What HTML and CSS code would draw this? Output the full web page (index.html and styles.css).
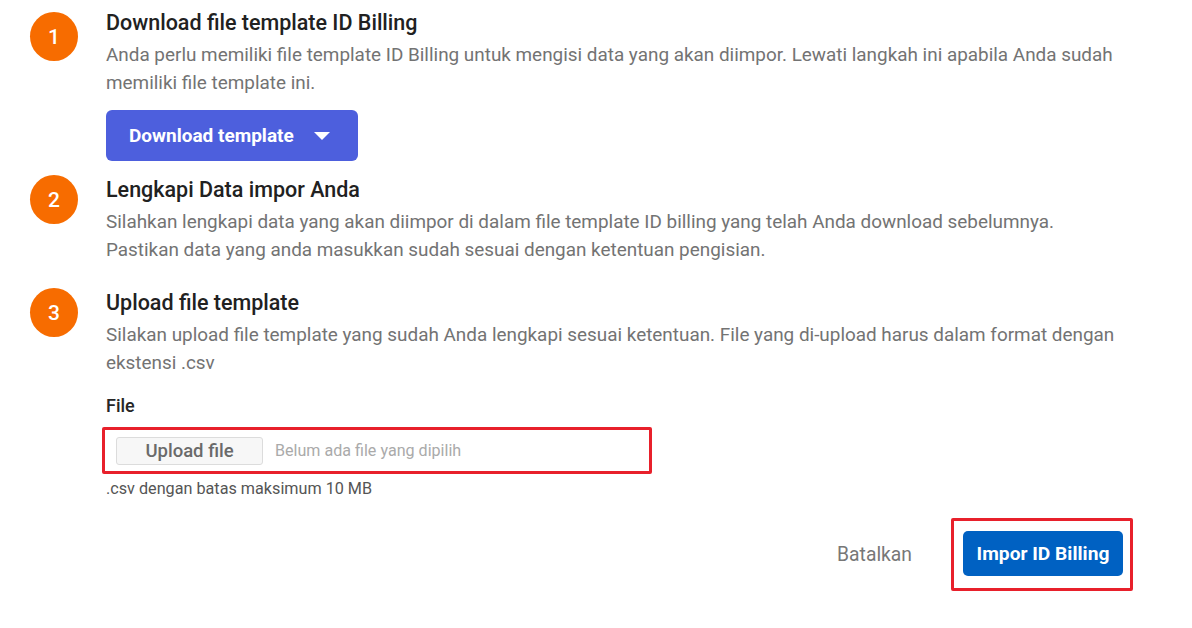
FILE: index.html
```html
<!DOCTYPE html>
<html lang="id">
<head>
<meta charset="utf-8">
<title>Impor ID Billing</title>
<link rel="stylesheet" href="styles.css">
</head>
<body>
<div class="page">
  <section class="step step-1">
    <div class="num">1</div>
    <div class="body">
      <h2 class="title">Download file template ID Billing</h2>
      <p class="desc">Anda perlu memiliki file template ID Billing untuk mengisi data yang akan diimpor. Lewati langkah ini apabila Anda sudah memiliki file template ini.</p>
      <button class="btn-download" type="button">Download template <span class="caret"></span></button>
    </div>
  </section>

  <section class="step step-2">
    <div class="num">2</div>
    <div class="body">
      <h2 class="title">Lengkapi Data impor Anda</h2>
      <p class="desc">Silahkan lengkapi data yang akan diimpor di dalam file template ID billing yang telah Anda download sebelumnya. Pastikan data yang anda masukkan sudah sesuai dengan ketentuan pengisian.</p>
    </div>
  </section>

  <section class="step step-3">
    <div class="num">3</div>
    <div class="body">
      <h2 class="title">Upload file template</h2>
      <p class="desc">Silakan upload file template yang sudah Anda lengkapi sesuai ketentuan. File yang di-upload harus dalam format dengan ekstensi .csv</p>
      <div class="field-label">File</div>
      <div class="file-box">
        <span class="file-btn">Upload file</span>
        <span class="file-name">Belum ada file yang dipilih</span>
      </div>
      <div class="hint">.csv dengan batas maksimum 10 MB</div>
    </div>
  </section>

  <footer class="actions">
    <button class="btn-cancel" type="button">Batalkan</button>
    <div class="highlight">
      <button class="btn-primary" type="button">Impor ID Billing</button>
    </div>
  </footer>
</div>
</body>
</html>
```

FILE: styles.css
```css
* { box-sizing: border-box; }
html, body { margin: 0; padding: 0; background: #fff; }
body {
  font-family: Roboto, "Liberation Sans", Arial, sans-serif;
  color: #212121;
  width: 1192px;
  height: 628px;
  overflow: hidden;
}
.page {
  padding: 8px 59px 0 30px;
}
.step {
  display: flex;
  align-items: flex-start;
  gap: 28px;
}
.num {
  flex: 0 0 48px;
  width: 48px;
  height: 49px;
  border-radius: 50%;
  background: #f76c00;
  color: #fff;
  font-size: 21px;
  font-weight: 500;
  display: flex;
  align-items: center;
  justify-content: center;
}
.step-1 .num { margin-top: 4px; }
.body {
  flex: 1;
  min-width: 0;
  max-width: 1016px;
}
.title {
  margin: 0;
  font-size: 21.5px;
  font-weight: 500;
  line-height: 30px;
  color: #212121;
}
.desc {
  margin: 3px 0 0;
  font-size: 18.9px;
  line-height: 28px;
  color: #737373;
}
.btn-download {
  margin-top: 13px;
  height: 51px;
  width: 252px;
  border: 0;
  border-radius: 6px;
  background: #4d5fdd;
  color: #fff;
  font-family: inherit;
  font-size: 19px;
  font-weight: 700;
  padding: 0 0 0 23px;
  display: flex;
  align-items: center;
  cursor: pointer;
}
.caret {
  display: inline-block;
  width: 0;
  height: 0;
  margin-left: 20px;
  border-left: 8px solid transparent;
  border-right: 8px solid transparent;
  border-top: 8px solid #fff;
}
.step-2 { margin-top: 14px; }
.step-3 { margin-top: 24px; }
.field-label {
  margin-top: 17px;
  font-size: 18px;
  font-weight: 500;
  line-height: 24px;
  color: #262626;
}
.file-box {
  margin-top: 9px;
  margin-left: -4px;
  width: 550px;
  height: 47px;
  border: 3px solid #e8202b;
  border-radius: 2px;
  display: flex;
  align-items: center;
  padding-left: 11px;
}
.file-btn {
  width: 147px;
  height: 28px;
  border: 1px solid #dcdcdc;
  border-radius: 3px;
  background: #f7f7f7;
  color: #6a6a6a;
  font-size: 18.5px;
  font-weight: 500;
  display: flex;
  align-items: center;
  justify-content: center;
}
.file-name {
  margin-left: 12px;
  font-size: 16.1px;
  color: #aaaaaa;
}
.hint {
  margin-top: 5px;
  font-size: 16.2px;
  line-height: 20px;
  color: #555;
}
.actions {
  margin-top: 19px;
  display: flex;
  justify-content: flex-end;
  align-items: center;
}
.btn-cancel {
  border: 0;
  background: none;
  font-family: inherit;
  font-size: 19.3px;
  color: #777;
  padding: 0;
  margin-right: 39px;
  cursor: pointer;
}
.highlight {
  border: 3px solid #e8202b;
  border-radius: 2px;
  padding: 10px 7px 12px 9px;
}
.btn-primary {
  display: block;
  width: 160px;
  height: 45px;
  border: 0;
  border-radius: 5px;
  background: #0061c2;
  color: #fff;
  font-family: inherit;
  font-size: 19.2px;
  font-weight: 700;
  cursor: pointer;
}
```
